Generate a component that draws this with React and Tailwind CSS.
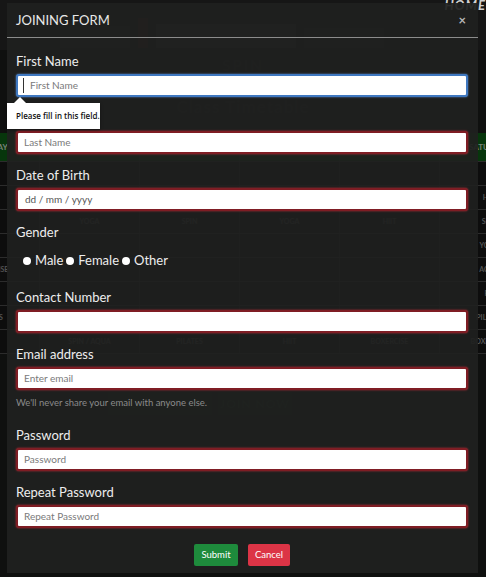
import React from 'react';

const days = ['MONDAY', 'TUESDAY', 'WEDNESDAY', 'THURSDAY', 'FRIDAY', 'SATURDAY'];
const rows = [
  ['', '', '', '', '', ''],
  ['SPIN', 'AQUA', 'PILATES', 'SPIN', 'YOGA', 'HIIT'],
  ['YOGA', 'YOGA', 'SPIN', 'YOGA', 'HIIT', 'SPIN'],
  ['', '', '', '', '', 'YOGA'],
  ['BOXERCISE', '', '', '', '', 'AQUA'],
  ['', '', '', '', '', 'FIT'],
  ['PILATES', '', '', '', '', 'PILATES'],
  ['SPIN', 'SPIN / AQUA', 'PILATES', 'HIIT', 'BOXERCISE', 'BOXERCISE'],
];

function Field({ label, placeholder, focused, date }) {
  return (
    <div className="flex flex-col">
      <label className="h-[18px] leading-[18px] text-[13px] text-[#ededed]">{label}</label>
      <div
        className={
          'mt-[4px] h-[23px] rounded-[3px] bg-white flex items-center ' +
          (focused
            ? 'border-2 border-[#3f78c0] shadow-[0_0_2px_#5b8fd0]'
            : 'border-2 border-[#7f1d24] shadow-[0_0_2px_#c0303a]')
        }
      >
        {placeholder && (
          <span
            className={
              'text-[10px] ' +
              (date ? 'pl-[7px] text-[#555]' : 'pl-[6px] text-[#7a7a7a]') +
              (focused ? ' border-l border-[#333] pl-[1px] ml-[5px]' : '')
            }
          >
            {placeholder}
          </span>
        )}
      </div>
    </div>
  );
}

export default function App() {
  return (
    <div
      className="relative w-[486px] h-[577px] overflow-hidden bg-[#1a1b1a]"
      style={{ fontFamily: '"Segoe UI", Lato, "Open Sans", sans-serif' }}
    >
      {/* page behind the modal */}
      <div className="flex flex-col">
        <div className="h-[50px] bg-[#262626] flex items-end gap-[8px] px-[60px] pb-[2px]">
          <div className="w-[70px] h-[22px] bg-[#3a3a3a]" />
          <div className="w-[10px] h-[30px] bg-[#5a1d1d]" />
          <div className="w-[140px] h-[24px] bg-[#454545]" />
          <div className="w-[80px] h-[20px] bg-[#3f3f3f]" />
        </div>
        <div className="h-[30px] flex items-center justify-center text-[15px] font-bold tracking-[2px] text-[#3a3b3a]">SPIN</div>
        <div className="h-[53px] flex items-center justify-center text-[17px] font-bold tracking-[1px] text-[#3a3b3a]">Class Timetable</div>
        <div className="ml-[-60px] w-[600px] flex flex-col">
          <div className="h-[29px] grid grid-cols-6 bg-[#0c5a14] border-b border-[#4a4a4a]">
            {days.map((d) => (
              <div key={d} className="flex items-center justify-center text-[8px] font-bold text-[#c8d8c8] border-r border-[#2e5a30]">
                {d}
              </div>
            ))}
          </div>
          {rows.map((r, i) => (
            <div key={i} className="h-[24px] grid grid-cols-6 bg-[#161716] border-b border-[#4a4a4a]">
              {r.map((c, j) => (
                <div key={j} className="flex items-center justify-center text-[7px] font-bold text-[#8a8a8a] border-r border-[#3c3c3c]">
                  {c}
                </div>
              ))}
            </div>
          ))}
        </div>
        <div className="mt-[38px] flex justify-center gap-[6px]">
          <div className="ml-[-86px] w-[104px] h-[23px] bg-[#1d3a1f] flex items-center justify-center text-[12px] font-bold tracking-[1px] text-[#2f5a32]">READ MORE</div>
          <div className="w-[74px] h-[23px] bg-[#1d3a1f] flex items-center justify-center text-[12px] font-bold tracking-[1px] text-[#2f5a32]">JOIN NOW</div>
        </div>
        <div className="mt-[40px] flex justify-center text-[15px] font-bold tracking-[2px] text-[#3a3b3a]">SOCIAL</div>
      </div>

      {/* backdrop */}
      <div className="absolute inset-0 bg-black/40" />
      <div className="absolute right-[0px] top-[-4px] text-[13px] font-bold italic tracking-[1px] text-[#d0d0d0]">HOME</div>

      {/* modal */}
      <div className="absolute left-[7px] top-[3px] w-[471px] h-[570px] bg-[#1f201f]/[0.93] flex flex-col">
        <div className="h-[35px] flex items-center justify-between pl-[9px] pr-[12px] pt-[1px] border-b border-[#8c8c8c]">
          <span className="text-[13px] text-[#e8e8e8]">JOINING FORM</span>
          <span className="text-[13px] font-bold text-[#b5b5b5] leading-none">×</span>
        </div>
        <div className="flex flex-col pl-[9px] pr-[10px] pt-[14px]">
          <div className="flex flex-col gap-[12px]">
            <Field label="First Name" placeholder="First Name" focused />
            <Field label="Last Name" placeholder="Last Name" />
            <Field label="Date of Birth" placeholder="dd / mm / yyyy" date />
          </div>
          <div className="mt-[12px] h-[18px] leading-[18px] text-[13px] text-[#ededed]">Gender</div>
          <div className="mt-[12px] h-[16px] flex items-center pl-[7px] text-[13px] text-[#ededed]">
            <span className="w-[8px] h-[8px] rounded-full bg-white mr-[4px]" />
            <span className="mr-[3px]">Male</span>
            <span className="w-[8px] h-[8px] rounded-full bg-white mr-[4px]" />
            <span className="mr-[3px]">Female</span>
            <span className="w-[8px] h-[8px] rounded-full bg-white mr-[4px]" />
            <span>Other</span>
          </div>
          <div className="mt-[19px] flex flex-col gap-[12px]">
            <Field label="Contact Number" />
            <Field label="Email address" placeholder="Enter email" />
          </div>
          <div className="mt-[7px] h-[12px] leading-[12px] text-[9.5px] text-[#8a8a8a]">We'll never share your email with anyone else.</div>
          <div className="mt-[17px] flex flex-col gap-[12px]">
            <Field label="Password" placeholder="Password" />
            <Field label="Repeat Password" placeholder="Repeat Password" />
          </div>
          <div className="mt-[16px] flex justify-center gap-[10px]">
            <button className="w-[44px] h-[22px] rounded-[2px] bg-[#1e8b3c] text-[9.5px] text-white">Submit</button>
            <button className="w-[42px] h-[22px] rounded-[2px] bg-[#dc3446] text-[9.5px] text-white">Cancel</button>
          </div>
        </div>
      </div>

      {/* validation tooltip */}
      <div className="absolute left-[7px] top-[103px] w-[93px] h-[26px] bg-white shadow-[0_1px_3px_rgba(0,0,0,0.4)] flex items-center pl-[9px]">
        <div className="absolute left-[7px] top-[-6px] w-0 h-0 border-l-[6px] border-l-transparent border-r-[6px] border-r-transparent border-b-[6px] border-b-white" />
        <span className="whitespace-nowrap text-[8px] font-semibold text-[#111]" style={{ fontFamily: '"Segoe UI", "Open Sans", sans-serif' }}>Please fill in this field.</span>
      </div>
    </div>
  );
}
